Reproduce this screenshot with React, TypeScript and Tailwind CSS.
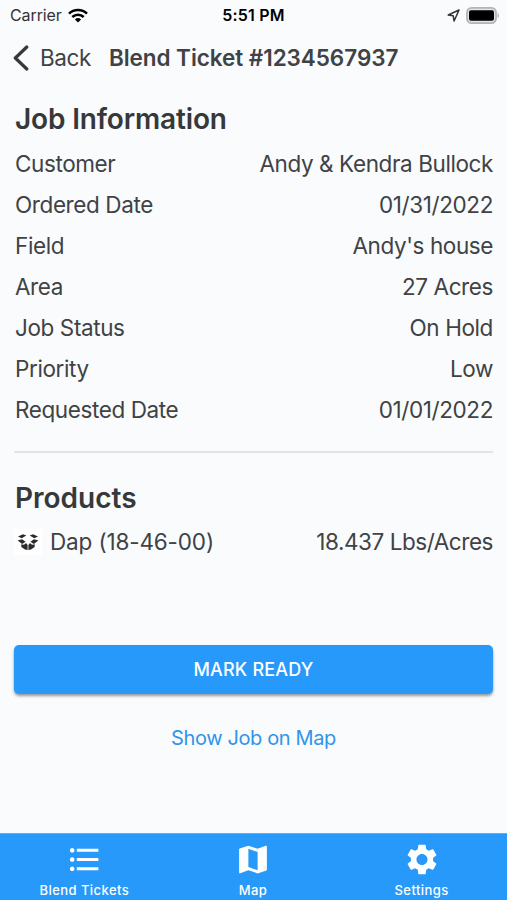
import React from 'react';
import { MdFormatListBulleted, MdMap, MdSettings } from 'react-icons/md';

interface DetailRowProps {
    label: string;
    value: string;
}

const jobDetails: DetailRowProps[] = [
    { label: 'Customer', value: 'Andy & Kendra Bullock' },
    { label: 'Ordered Date', value: '01/31/2022' },
    { label: 'Field', value: "Andy's house" },
    { label: 'Area', value: '27 Acres' },
    { label: 'Job Status', value: 'On Hold' },
    { label: 'Priority', value: 'Low' },
    { label: 'Requested Date', value: '01/01/2022' },
];

const WifiIcon = () => (
    <svg viewBox="0 0 20 15" className="w-5 h-[15px]" fill="none" stroke="#000" strokeWidth="2.6">
        <path d="M1 5.6a12.9 12.9 0 0 1 18 0" />
        <path d="M4.3 9a8.2 8.2 0 0 1 11.4 0" />
        <path d="M10 14.6 6.9 11.5a4.5 4.5 0 0 1 6.2 0Z" fill="#000" stroke="none" />
    </svg>
);

const LocationIcon = () => (
    <svg viewBox="0 0 13 13" className="w-[13px] h-[13px]" fill="none" stroke="#333" strokeWidth="1.5" strokeLinejoin="round">
        <path d="M12 1 1.2 6l5 .8.9 5.2Z" />
    </svg>
);

const BatteryIcon = () => (
    <svg viewBox="0 0 33 17" className="w-[33px] h-[17px]">
        <rect x="1" y="0.9" width="29" height="15.2" rx="4.6" fill="#e4e4e4" stroke="#b4b4b4" strokeWidth="1.8" />
        <rect x="3" y="3.2" width="25" height="10.6" rx="2" fill="#000" />
        <path d="M31.6 6v5c1.6-.6 1.6-4.4 0-5Z" fill="#aaa" />
    </svg>
);

const BoxIcon = () => (
    <svg viewBox="0 0 28 26" className="w-7 h-[26px]" fill="#2b2b2b">
        <rect width="28" height="26" fill="#fff" />
        <path d="M4 7.4 9 5.300l3.300 1.200-4.600 2.700Z" />
        <path d="M24 7.400 19 5.300l-3.300 1.200 4.600 2.700Z" />
        <path d="m3.600 11.500 4.400-1.300 3.600 2.500-3.400 2.300Z" />
        <path d="m24.400 11.500-4.400-1.300-3.600 2.500 3.400 2.300Z" />
        <path d="m7.200 15.200 2.800.5 2-1.700 1.600 1.900v5l-2.600-.3-3.600-2.600Z" />
        <path d="m20.800 15.200-2.800.5-2-1.700-1.600 1.900v5l2.600-.3 3.600-2.600Z" />
    </svg>
);

const StatusBar = () => (
    <div className="grid grid-cols-3 items-center h-[30px] pl-2.5 pr-2">
        <div className="flex items-center gap-1.5">
            <span className="text-[16px] tracking-[-0.1px] text-[#333]">Carrier</span>
            <WifiIcon />
        </div>
        <span className="text-center text-[16px] tracking-[0.2px] pr-[2px] font-semibold text-black">5:51 PM</span>
        <div className="flex items-center justify-end gap-[6px]">
            <LocationIcon />
            <BatteryIcon />
        </div>
    </div>
);

const Header = () => (
    <header className="flex items-center h-14 pl-[13px]">
        <button className="flex items-center text-[22.5px] tracking-[-0.4px]">
            <svg viewBox="0 0 16 26" className="w-4 h-[26px] mr-[11px]" fill="none" stroke="#36383a" strokeWidth="3.2" strokeLinecap="round" strokeLinejoin="round">
                <path d="M13.8 2 2.3 13l11.5 11" />
            </svg>
            Back
        </button>
        <h1 className="ml-[18px] text-[22.5px] tracking-[-0.06px] font-semibold">Blend Ticket #1234567937</h1>
    </header>
);

const DetailRow: React.FC<DetailRowProps> = ({ label, value }) => (
    <div className="flex justify-between items-center h-[41.1px] pl-px text-[22.5px]">
        <span className="tracking-[-0.4px]">{label}</span>
        <span className="tracking-[-0.4px]">{value}</span>
    </div>
);

const TabBar = () => (
    <nav className="grid grid-cols-3 h-[67px] pt-[7px] pr-px bg-[#2699fb] border-t border-[#6fa9dc] text-white text-[13px] tracking-[0.45px] font-medium">
        <button className="flex flex-col items-center">
            <MdFormatListBulleted className="w-[37px] h-[37px]" />
            <span className="leading-6">Blend Tickets</span>
        </button>
        <button className="flex flex-col items-center">
            <MdMap className="w-[38px] h-[37px]" />
            <span className="leading-6">Map</span>
        </button>
        <button className="flex flex-col items-center">
            <MdSettings className="w-[38px] h-[37px]" />
            <span className="leading-6">Settings</span>
        </button>
    </nav>
);

const App: React.FC = () => {
    return (
        <div className="flex flex-col w-[507px] h-[900px] overflow-hidden bg-[#f9fbfd] text-[#404244] font-['Inter',sans-serif]">
            <StatusBar />
            <Header />
            <main className="flex-1 px-3.5">
                <h2 className="mt-[15px] h-[42px] pl-px leading-[36px] text-[28px] tracking-[-0.15px] font-semibold text-[#36383a]">Job Information</h2>
                {jobDetails.map((detail) => (
                    <DetailRow key={detail.label} label={detail.label} value={detail.value} />
                ))}
                <hr className="mt-5 border-t-2 border-[#e2e4e6]" />
                <h2 className="mt-[27px] h-[42px] pl-px leading-[36px] text-[28px] font-semibold text-[#36383a]">Products</h2>
                <div className="flex items-center h-[41px] text-[22.5px]">
                    <BoxIcon />
                    <span className="ml-2 tracking-[-0.15px]">Dap (18-46-00)</span>
                    <span className="ml-auto tracking-[-0.45px]">18.437 Lbs/Acres</span>
                </div>
                <button className="block w-full h-[49px] mt-[82px] rounded-[5px] bg-[#2699fb] text-white text-[18px] tracking-[0.2px] font-medium shadow-[0_2px_3px_rgba(0,0,0,0.4)]">
                    MARK READY
                </button>
                <button className="block w-full h-[49px] mt-5 text-[20px] tracking-[-0.38px] text-[#2f95ea]">Show Job on Map</button>
            </main>
            <TabBar />
        </div>
    );
};

export default App;
